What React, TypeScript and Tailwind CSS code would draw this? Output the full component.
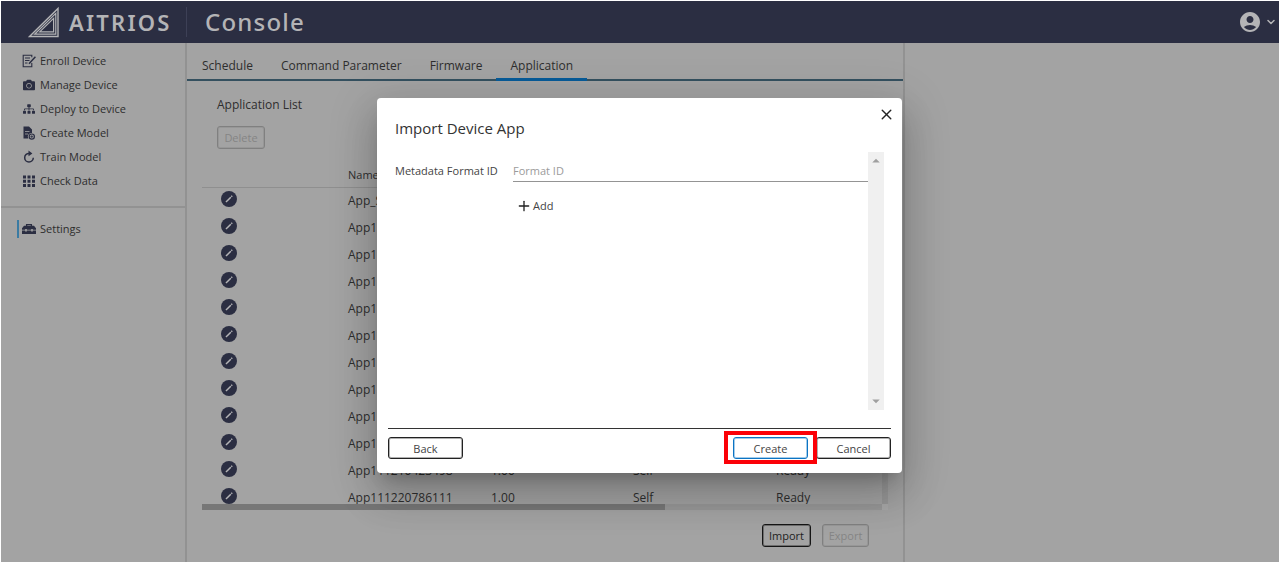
import React from "react";
import { FaCamera, FaSitemap } from "react-icons/fa";
import { MdAccountCircle, MdArrowDropDown, MdArrowDropUp } from "react-icons/md";
import { ChevronDown, Plus, X } from "lucide-react";

function LogoMark() {
  return (
    <svg width="32" height="32" viewBox="0 0 32 32" fill="none" stroke="#b4b4b6" aria-hidden="true">
      <path d="M2.5 30.5 L31 2.4 V30.5 Z" strokeWidth="1.4" />
      <path d="M7.6 28.2 L28.8 7.4 V28.2 Z" strokeWidth="1.2" />
      <path d="M12.7 25.9 L26.6 12.4 V25.9 Z" strokeWidth="1.2" />
    </svg>
  );
}

function EnrollIcon() {
  return (
    <svg width="14" height="14" viewBox="0 0 14 14" fill="none" stroke="#2b2e42" aria-hidden="true">
      <path d="M9.8 3.2 V1.2 H1.2 V12.8 H9.8 V9" strokeWidth="1.1" />
      <path d="M3 4 H8 M3 6.5 H7.5 M3 9 H5.5" strokeWidth="1" />
      <path d="M13.4 2.8 L7 9.8" strokeWidth="1.5" />
    </svg>
  );
}

function ModelIcon() {
  return (
    <svg width="14" height="14" viewBox="0 0 14 14" aria-hidden="true">
      <path d="M1.5 0.5 H7 L10 3.5 V7 A3.6 3.6 0 0 0 6.4 12.5 H1.5 Z" fill="#2b2e42" />
      <path d="M3 5.5 H7.5 M3 8 H6" stroke="#a3a3a3" strokeWidth="0.8" />
      <circle cx="9.8" cy="10.6" r="2.6" fill="none" stroke="#2b2e42" strokeWidth="1.2" />
      <path d="M9.8 9.2 V12 M8.4 10.6 H11.2" stroke="#2b2e42" strokeWidth="0.8" />
    </svg>
  );
}

function TrainIcon() {
  return (
    <svg width="14" height="14" viewBox="0 0 14 14" aria-hidden="true">
      <path d="M7 3.4 A4.3 4.3 0 1 0 11.3 7.8" fill="none" stroke="#2b2e42" strokeWidth="1.5" />
      <path d="M6.5 0.6 L10.4 3.4 L6.5 6.2 Z" fill="#2b2e42" />
    </svg>
  );
}

function GridIcon() {
  return (
    <svg width="12" height="12" viewBox="0 0 12 12" fill="#2b2e42" aria-hidden="true">
      <path d="M0 0.5h3v3H0z M4.5 0.5h3v3h-3z M9 0.5h3v3H9z M0 4.75h3v3H0z M4.5 4.75h3v3h-3z M9 4.75h3v3H9z M0 9h3v3H0z M4.5 9h3v3h-3z M9 9h3v3H9z" />
    </svg>
  );
}

function ToolboxIcon() {
  return (
    <svg width="14" height="12" viewBox="0 0 14 12" fill="#2b2e42" aria-hidden="true">
      <path d="M4.6 3 V1.6 H9.4 V3" fill="none" stroke="#2b2e42" strokeWidth="1.3" />
      <path d="M2 2.8 H12 L14 5.2 V6.8 H10.8 V6 H9.2 V6.8 H4.8 V6 H3.2 V6.8 H0 V5.2 Z" />
      <path d="M0 7.6 H3.2 V8.4 H4.8 V7.6 H9.2 V8.4 H10.8 V7.6 H14 V11 H0 Z" />
    </svg>
  );
}

function EditIcon() {
  return (
    <svg width="16" height="16" viewBox="0 0 16 16" aria-hidden="true">
      <circle cx="8" cy="8" r="8" fill="#2b2e42" />
      <path d="M5 11 L9.8 6.2" stroke="#b4b4b6" strokeWidth="1.5" />
      <path d="M10.3 5.7 L11.2 4.8" stroke="#b4b4b6" strokeWidth="1.5" />
    </svg>
  );
}

const navItems = [
  { label: "Enroll Device", icon: <EnrollIcon /> },
  { label: "Manage Device", icon: <FaCamera size={12} /> },
  { label: "Deploy to Device", icon: <FaSitemap size={12} /> },
  { label: "Create Model", icon: <ModelIcon /> },
  { label: "Train Model", icon: <TrainIcon /> },
  { label: "Check Data", icon: <GridIcon /> },
];

const tabs = ["Schedule", "Command Parameter", "Firmware", "Application"];

const apps = [
  "App_S",
  "App10",
  "App10",
  "App10",
  "App10",
  "App10",
  "App11",
  "App11",
  "App11",
  "App11",
  "App111210423498",
  "App111220786111",
];

function Header() {
  return (
    <header className="flex h-[42px] shrink-0 items-center bg-[#2b2e42] pl-[26px] font-['Noto_Sans',sans-serif] text-[#b4b4b6]">
      <LogoMark />
      <span className="ml-[10px] w-[117px] text-[22px] leading-none font-semibold tracking-widest">AITRIOS</span>
      <span className="h-[30px] w-px bg-[#3d4056]" />
      <h1 className="ml-[18px] text-[24px] leading-none font-medium tracking-wider">Console</h1>
      <button type="button" aria-label="Account" className="mr-[2px] ml-auto flex items-center gap-[3px]">
        <MdAccountCircle size={24} />
        <ChevronDown size={12} strokeWidth={3} />
      </button>
    </header>
  );
}

function Sidebar() {
  return (
    <nav className="w-[186px] shrink-0 border-r-2 border-[#929292] pt-[6px] text-[11px] text-[#2e2e2e]">
      <ul>
        {navItems.map((item) => (
          <li key={item.label}>
            <a href="#" className="flex h-6 items-center gap-1 pl-5">
              <span className="flex w-[15px] justify-center text-[#2b2e42]">{item.icon}</span>
              {item.label}
            </a>
          </li>
        ))}
      </ul>
      <div className="mt-[13px] border-t-2 border-[#929292] pt-3">
        <a href="#" className="ml-4 flex h-[18px] items-center gap-1 border-l-2 border-[#3a7ba3] pl-[3px]">
          <ToolboxIcon />
          Settings
        </a>
      </div>
    </nav>
  );
}

function AppTable() {
  return (
    <div className="mx-[15px]">
      <div className="flex h-[343px] overflow-hidden">
        <div className="flex-1 overflow-hidden">
          <table className="w-full table-fixed border-collapse text-left text-[12px] leading-3 text-[#2e2e2e]">
            <thead>
              <tr className="h-[26px] border-b border-[#8f8f8f] text-[11px]">
                <th className="w-[146px] p-0" aria-label="Edit" />
                <th className="w-[143px] p-0 pt-[2px] font-normal">Name</th>
                <th className="w-[142px] p-0 font-normal">Version</th>
                <th className="w-[143px] p-0 font-normal">Maker</th>
                <th className="p-0 font-normal">Status</th>
              </tr>
            </thead>
            <tbody>
              {apps.map((name, i) => (
                <tr key={i} className="h-[27px]">
                  <td className="p-0 pl-[19px]">
                    <button type="button" aria-label={"Edit " + name} className="block pb-[3px]">
                      <EditIcon />
                    </button>
                  </td>
                  <td className="p-0">{name}</td>
                  <td className="p-0">1.00</td>
                  <td className="p-0">Self</td>
                  <td className="p-0">Ready</td>
                </tr>
              ))}
            </tbody>
          </table>
        </div>
        <div className="w-[6px] bg-[#989898]" />
      </div>
      <div className="flex h-[6px] bg-[#989898]">
        <div className="w-[463px] bg-[#777]" />
        <div className="ml-auto w-[6px] bg-[#a8a8a8]" />
      </div>
    </div>
  );
}

function ImportDialog() {
  const outline = "block h-[22px] w-[75px] rounded-[3px] border bg-white text-[11px] leading-none text-[#444]";
  const dark = " border-[#222] shadow-[inset_0_0_0_1px_#b0b0b0]";
  return (
    <div className="absolute inset-0 flex items-start justify-center pt-[97px] pr-px">
      <section
        role="dialog"
        aria-modal="true"
        aria-labelledby="dialog-title"
        className="flex h-[375px] w-[525px] flex-col rounded-[4px] bg-white px-[11px] shadow-[0_11px_15px_-7px_rgba(0,0,0,0.2),0_24px_38px_3px_rgba(0,0,0,0.14),0_9px_46px_8px_rgba(0,0,0,0.12)]"
      >
        <div className="flex h-[54px] items-start justify-between pl-[7px]">
          <h2 id="dialog-title" className="pt-5 text-[15px] leading-5 text-[#333]">
            Import Device App
          </h2>
          <button type="button" aria-label="Close" className="-mr-1 pt-2 text-[#222]">
            <X size={17} strokeWidth={2} />
          </button>
        </div>
        <div className="mr-[7px] flex h-[258px]">
          <div className="flex-1 pl-[7px] text-[11px] text-[#444]">
            <div className="flex pt-2">
              <label htmlFor="format-id" className="w-[118px] leading-[22px]">
                Metadata Format ID
              </label>
              <input
                id="format-id"
                placeholder="Format ID"
                className="h-[22px] min-w-0 flex-1 border-b border-[#949494] bg-transparent outline-none placeholder:text-[#9b9b9b]"
              />
            </div>
            <button type="button" className="mt-4 ml-[121px] flex items-center gap-px leading-4">
              <Plus size={16} strokeWidth={2} className="text-[#222]" />
              Add
            </button>
          </div>
          <div className="flex w-4 flex-col items-center justify-between bg-[#f0f0f0] text-[#a0a0a0]">
            <MdArrowDropUp size={18} />
            <MdArrowDropDown size={18} />
          </div>
        </div>
        <div className="mt-[18px] flex items-start justify-between border-t border-[#333] pt-2">
          <button type="button" className={outline + dark}>
            Back
          </button>
          <div className="flex gap-2">
            <div className="relative">
              <button type="button" className={outline + " border-[#0c74c4] shadow-[inset_0_0_0_1px_#a5cdea]"}>
                Create
              </button>
              <span className="pointer-events-none absolute -inset-x-[9px] -top-[6px] h-[33px] border-4 border-[#fb0007]" />
            </div>
            <button type="button" className={outline + dark}>
              Cancel
            </button>
          </div>
        </div>
      </section>
    </div>
  );
}

export default function App() {
  return (
    <div className="relative flex min-h-screen flex-col overflow-hidden border-t border-r-2 border-l border-white bg-[#a3a3a3] font-['Open_Sans','Noto_Sans',sans-serif]">
      <Header />
      <div className="flex flex-1">
        <Sidebar />
        <main className="min-w-0 flex-1">
          <div role="tablist" className="flex h-[38px] border-b-2 border-[#34505f] pl-px text-[12px] text-[#2e2e2e]">
            {tabs.map((tab) => (
              <button
                key={tab}
                type="button"
                role="tab"
                aria-selected={tab === "Application"}
                className="-mb-[2px] border-b-[3px] border-transparent px-[14px] pt-[11px] aria-selected:border-[#075b98]"
              >
                {tab}
              </button>
            ))}
          </div>
          <div className="px-[30px] pt-[14px] pb-3">
            <h2 className="text-[12px] leading-5 text-[#2e2e2e]">Application List</h2>
            <button
              type="button"
              disabled
              className="mt-[11px] block h-[23px] w-12 rounded-[3px] border border-[#808080] text-[11px] leading-none text-[#858585] shadow-[inset_0_0_0_1px_#979797]"
            >
              Delete
            </button>
          </div>
          <AppTable />
          <div className="flex justify-end gap-[11px] pt-[14px] pr-[34px] text-[11px] leading-none">
            <button
              type="button"
              className="h-[23px] w-[49px] rounded-[3px] border border-[#161616] text-[#222] shadow-[inset_0_0_0_1px_#6e6e6e]"
            >
              Import
            </button>
            <button
              type="button"
              disabled
              className="h-[23px] w-[47px] rounded-[3px] border border-[#808080] text-[#858585] shadow-[inset_0_0_0_1px_#979797]"
            >
              Export
            </button>
          </div>
        </main>
        <aside className="w-[376px] shrink-0 border-l-2 border-[#929292]" />
      </div>
      <ImportDialog />
    </div>
  );
}
